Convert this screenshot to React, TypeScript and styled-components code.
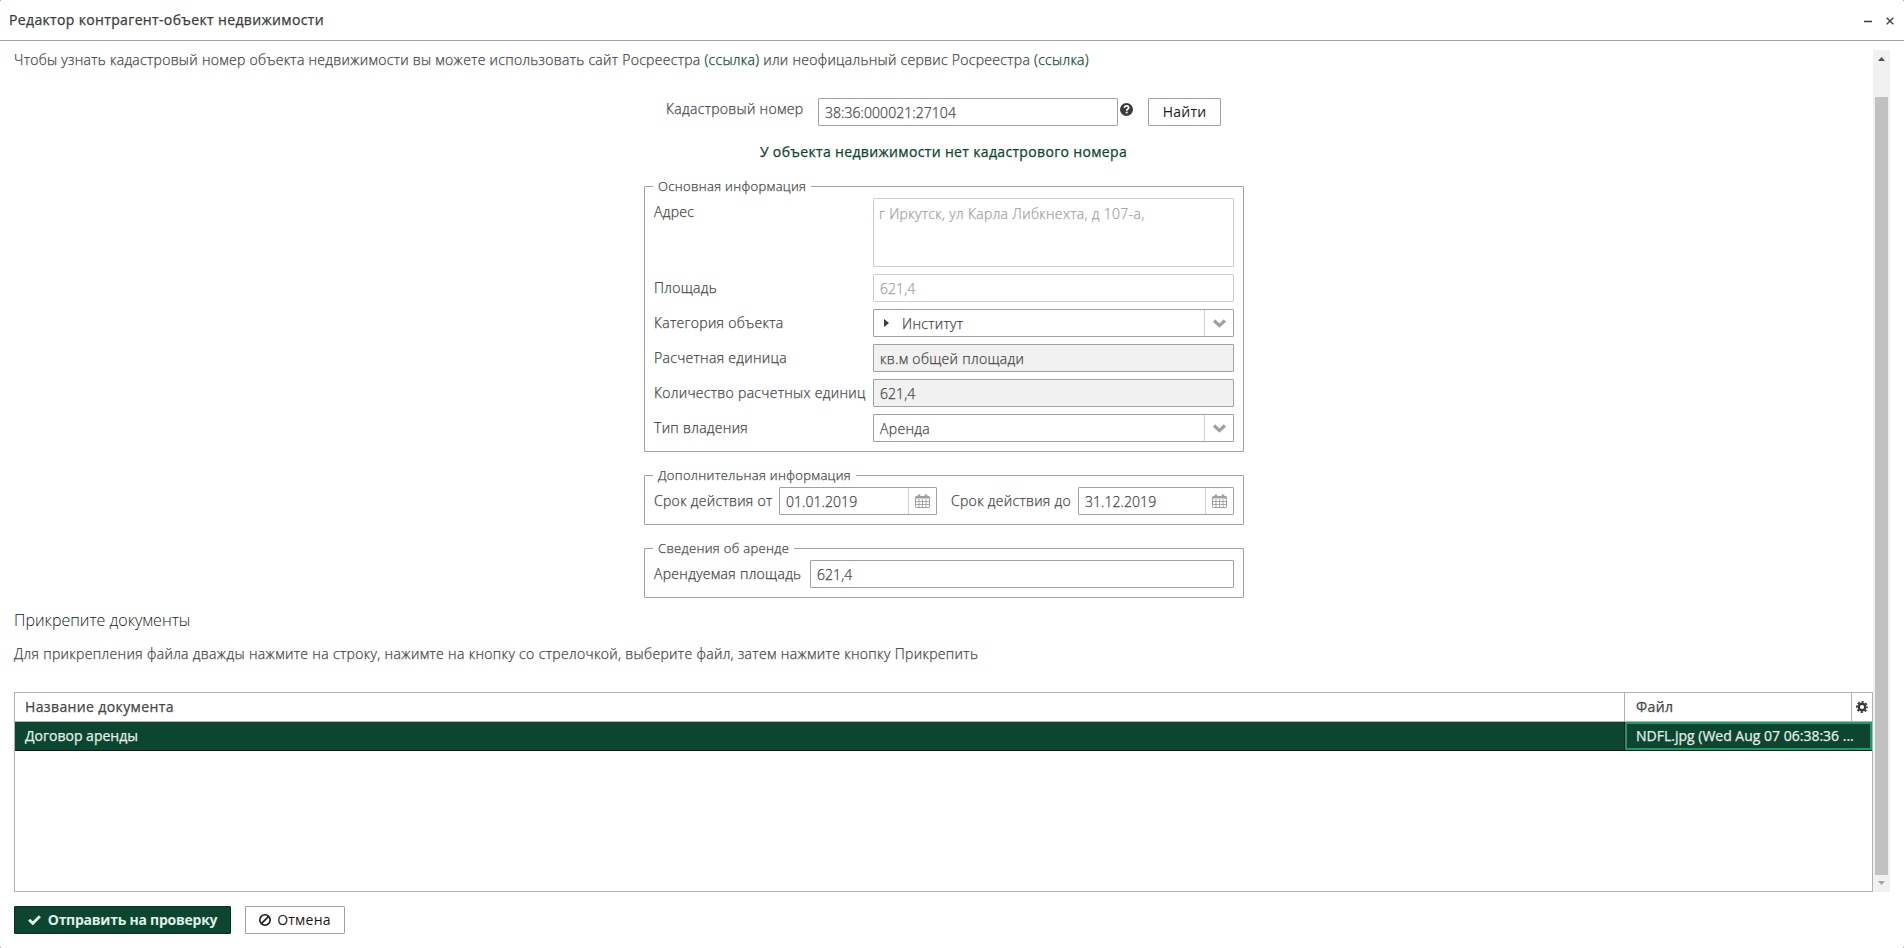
import React from 'react';
import styled, { createGlobalStyle, css } from 'styled-components';

const GlobalStyle = createGlobalStyle`
  *, *::before, *::after { box-sizing: border-box; }
  body { margin: 0; background: #8f8f8f; }
`;

const Window = styled.div`
  display: flex;
  flex-direction: column;
  width: 1904px;
  height: 948px;
  overflow: hidden;
  border-radius: 2px;
  background: #fff;
  font-family: 'Open Sans', sans-serif;
  font-size: 14px;
  font-weight: 300;
  letter-spacing: 0.3px;
  line-height: 20px;
  color: #474747;
  -webkit-text-stroke: 0.25px currentColor;
  svg { display: block; flex: none; }
`;

const Header = styled.header`
  display: flex;
  align-items: center;
  height: 41px;
  padding: 0 10px 0 9px;
  border-bottom: 1px solid #a0a0a0;
  font-weight: 400;
  letter-spacing: 0.35px;
  color: #3b3b3b;
`;

const Title = styled.div`
  flex: 1;
  white-space: nowrap;
`;

const WindowControls = styled.div`
  display: flex;
  gap: 14px;
  padding-top: 2px;
`;

const Body = styled.div`
  display: flex;
  height: 842px;
  margin: 9px 14px 0;
`;

const Content = styled.main`
  display: flex;
  flex-direction: column;
  width: 1859px;
`;

const Paragraph = styled.p<{ $top?: number; $spacing: number }>`
  margin: ${(p) => p.$top ?? 0}px 0 0;
  letter-spacing: ${(p) => p.$spacing}px;
  white-space: nowrap;
`;

const Link = styled.a`
  color: #0c4630;
`;

const SearchRow = styled.div`
  display: flex;
  justify-content: flex-end;
  width: 555px;
  height: 28px;
  margin: 28px 0 0 652px;
`;

const SearchLabel = styled.label`
  flex: 1;
  line-height: 21px;
  white-space: nowrap;
`;

const HelpIcon = styled.span`
  width: 30px;
  padding: 5px 0 0 2px;
`;

const LinkButton = styled.div`
  margin-top: 16px;
  text-align: center;
  font-weight: 400;
  letter-spacing: 0.34px;
  color: #0c4630;
`;

const Fieldset = styled.section<{ $top: number }>`
  position: relative;
  display: flex;
  flex-direction: column;
  gap: 7px;
  width: 600px;
  margin: ${(p) => p.$top}px 0 0 630px;
  padding: 11px 9px 9px;
  border: 1px solid #a0a0a0;
  border-radius: 1px;
`;

const Legend = styled.div`
  position: absolute;
  top: -11px;
  left: 8px;
  padding: 0 5px;
  background: #fff;
  font-size: 13px;
  letter-spacing: 0.33px;
  white-space: nowrap;
`;

const FormRow = styled.div<{ $tall?: boolean }>`
  display: flex;
  height: ${(p) => (p.$tall ? 69 : 28)}px;
`;

const Label = styled.label<{ $width: number; $drop?: number }>`
  width: ${(p) => p.$width}px;
  flex: none;
  padding-top: ${(p) => p.$drop ?? 4}px;
  white-space: nowrap;
`;

const Field = styled.div<{ $width?: number; $tone?: 'disabled' | 'readonly'; $area?: boolean; $numeric?: boolean }>`
  display: flex;
  ${(p) => (p.$width ? css`width: ${p.$width}px; flex: none;` : css`flex: 1;`)}
  border: 1px solid #a0a0a0;
  border-radius: 1px;
  padding-left: 6px;
  line-height: 28px;
  letter-spacing: ${(p) => (p.$numeric ? 0.06 : 0.32)}px;
  white-space: nowrap;
  ${(p) => p.$tone === 'disabled' && css`border-color: #cdcdcd; color: #a3a3a3;`}
  ${(p) => p.$tone === 'readonly' && css`background: #f1f1f1;`}
  ${(p) => p.$area && css`padding: 1px 0 0 5px;`}
`;

const Value = styled.span`
  display: flex;
  flex: 1;
`;

const TreeArrow = styled.span`
  width: 22px;
  padding: 9px 0 0 4px;
`;

const FieldButton = styled.span<{ $width: number }>`
  display: flex;
  align-items: center;
  justify-content: center;
  width: ${(p) => p.$width}px;
  border-left: 1px solid #d0d0d0;
  color: #a0a0a0;
`;

const Heading = styled.h3`
  margin: 11px 0 0;
  font-size: 16px;
  font-weight: 300;
  letter-spacing: 0;
  line-height: 22px;
  color: #191919;
  -webkit-text-stroke: 0;
`;

const Table = styled.div`
  height: 200px;
  margin-top: 28px;
  border: 1px solid #b1b1b1;
`;

const TableRow = styled.div<{ $header?: boolean }>`
  display: flex;
  height: 29px;
  font-weight: 400;
  letter-spacing: ${(p) => (p.$header ? 0.38 : 0)}px;
  line-height: 28px;
  color: ${(p) => (p.$header ? '#474747' : '#e3efe9')};
  background: ${(p) => (p.$header ? '#fff' : '#0c4630')};
  border-bottom: 1px solid ${(p) => (p.$header ? '#b1b1b1' : '#061d14')};
`;

const NameCell = styled.div<{ $edge: string }>`
  width: 1610px;
  padding-left: 10px;
  border-right: 1px solid ${(p) => p.$edge};
`;

const FileCell = styled.div<{ $focused?: boolean }>`
  flex: 1;
  padding-left: 11px;
  white-space: nowrap;
  ${(p) =>
    p.$focused &&
    css`
      height: 28px;
      padding-left: 9px;
      line-height: 24px;
      border: 2px solid #1a9c69;
    `}
`;

const ColumnMenu = styled.div`
  display: flex;
  align-items: center;
  justify-content: center;
  width: 21px;
  border-left: 1px solid #b1b1b1;
`;

const Scrollbar = styled.div`
  display: flex;
  flex-direction: column;
  align-items: center;
  justify-content: space-between;
  width: 17px;
  padding: 7px 0;
  background: #f1f1f1;
`;

const Thumb = styled.div`
  width: 13px;
  height: 778px;
  margin: 36px 0 6px;
  background: #c1c1c1;
`;

const Footer = styled.footer`
  display: flex;
  gap: 14px;
  margin: 14px 0 0 14px;
`;

const Button = styled.button<{ $width: number; $primary?: boolean }>`
  display: flex;
  align-items: center;
  justify-content: center;
  gap: ${(p) => (p.$primary ? 7 : 6)}px;
  width: ${(p) => p.$width}px;
  height: 28px;
  padding: 0;
  border: 1px solid ${(p) => (p.$primary ? '#08301f' : '#a0a0a0')};
  border-radius: 1px;
  background: ${(p) => (p.$primary ? '#0c4630' : '#fff')};
  color: ${(p) => (p.$primary ? '#dfeee7' : '#191919')};
  font: ${(p) => (p.$primary ? 700 : 400)} 14px/26px 'Open Sans', sans-serif;
  letter-spacing: ${(p) => (p.$primary ? -0.25 : 0.25)}px;
  white-space: nowrap;
  -webkit-text-stroke: 0;
`;

const Chevron = () => (
  <svg width="13" height="9" viewBox="0 0 13 9">
    <path d="M1.1 1.5 6.5 6.6 11.9 1.5" fill="none" stroke="currentColor" strokeWidth="3.2" />
  </svg>
);

const Calendar = () => (
  <svg width="15" height="14" viewBox="0 0 15 14" fill="none" stroke="currentColor">
    <rect x="0.5" y="2.5" width="14" height="11" rx="0.6" />
    <path d="M1 3.5H14" strokeWidth="2" />
    <path d="M4 0.4V3.5M11 0.4V3.5" strokeWidth="2.6" />
    <path d="M4 5V13M7.5 5V13M11 5V13M1 7.5H14M1 10.5H14" strokeWidth="0.9" />
  </svg>
);

const Help = () => (
  <svg width="13" height="13" viewBox="0 0 12 12">
    <circle cx="6" cy="6" r="6" fill="#3b3b3b" />
    <path d="M4 4.5C4.2 3.2 5 2.7 6.1 2.7 7.3 2.7 8 3.4 8 4.3 8 5.6 6.2 5.5 6.2 7.1" fill="none" stroke="#fff" strokeWidth="1.5" />
    <rect x="5.3" y="8" width="1.7" height="1.6" fill="#fff" />
  </svg>
);

const Check = () => (
  <svg width="13" height="10" viewBox="0 0 13 10">
    <path d="M1.1 4.8 4.8 8.4 11.9 1.3" fill="none" stroke="currentColor" strokeWidth="2.9" />
  </svg>
);

const Ban = () => (
  <svg width="12" height="12" viewBox="0 0 12 12" fill="none" stroke="currentColor" strokeWidth="1.6">
    <circle cx="6" cy="6" r="5.2" />
    <path d="M2.4 9.6 9.6 2.4" />
  </svg>
);

const Cog = () => (
  <svg width="12" height="12" viewBox="0 0 12 12" fill="none" stroke="#3b3b3b">
    <circle cx="6" cy="6" r="3.3" strokeWidth="2.4" />
    <circle cx="6" cy="6" r="5.1" strokeWidth="1.8" strokeDasharray="2.1 1.905" strokeDashoffset="1.05" />
  </svg>
);

const DateField = ({ width, value, button }: { width: number; value: string; button: number }) => (
  <Field $width={width} $numeric>
    <Value>{value}</Value>
    <FieldButton $width={button}><Calendar /></FieldButton>
  </Field>
);

export default function App() {
  return (
    <>
      <GlobalStyle />
      <Window>
        <Header>
          <Title>Редактор контрагент-объект недвижимости</Title>
          <WindowControls>
            <svg width="8" height="8" viewBox="0 0 8 8"><path d="M0 4.5H8" stroke="#3b3b3b" strokeWidth="1.3" /></svg>
            <svg width="8" height="8" viewBox="0 0 8 8"><path d="M0.7 0.7 7.3 7.3M7.3 0.7 0.7 7.3" stroke="#4b4b4b" strokeWidth="1.5" /></svg>
          </WindowControls>
        </Header>
        <Body>
          <Content>
            <Paragraph $spacing={0.29}>
              Чтобы узнать кадастровый номер объекта недвижимости вы можете использовать сайт Росреестра <Link>(ссылка)</Link> или неофицальный сервис Росреестра <Link>(ссылка)</Link>
            </Paragraph>
            <SearchRow>
              <SearchLabel>Кадастровый номер</SearchLabel>
              <Field $width={300} $numeric>38:36:000021:27104</Field>
              <HelpIcon><Help /></HelpIcon>
              <Button $width={73}>Найти</Button>
            </SearchRow>
            <LinkButton>У объекта недвижимости нет кадастрового номера</LinkButton>
            <Fieldset $top={24}>
              <Legend>Основная информация</Legend>
              <FormRow $tall>
                <Label $width={219}>Адрес</Label>
                <Field $tone="disabled" $area>г Иркутск, ул Карла Либкнехта, д 107-а,</Field>
              </FormRow>
              <FormRow>
                <Label $width={219}>Площадь</Label>
                <Field $tone="disabled" $numeric>621,4</Field>
              </FormRow>
              <FormRow>
                <Label $width={219}>Категория объекта</Label>
                <Field>
                  <Value>
                    <TreeArrow>
                      <svg width="5" height="8" viewBox="0 0 5 8"><path d="M0 0 5 4 0 8Z" fill="#3b3b3b" /></svg>
                    </TreeArrow>
                    Институт
                  </Value>
                  <FieldButton $width={29}><Chevron /></FieldButton>
                </Field>
              </FormRow>
              <FormRow>
                <Label $width={219}>Расчетная единица</Label>
                <Field $tone="readonly">кв.м общей площади</Field>
              </FormRow>
              <FormRow>
                <Label $width={219}>Количество расчетных единиц</Label>
                <Field $tone="readonly" $numeric>621,4</Field>
              </FormRow>
              <FormRow>
                <Label $width={219}>Тип владения</Label>
                <Field>
                  <Value>Аренда</Value>
                  <FieldButton $width={29}><Chevron /></FieldButton>
                </Field>
              </FormRow>
            </Fieldset>
            <Fieldset $top={23}>
              <Legend>Дополнительная информация</Legend>
              <FormRow>
                <Label $width={125}>Срок действия от</Label>
                <DateField width={158} value="01.01.2019" button={28} />
                <Label as="span" $width={14} />
                <Label $width={127}>Срок действия до</Label>
                <DateField width={156} value="31.12.2019" button={28} />
              </FormRow>
            </Fieldset>
            <Fieldset $top={23}>
              <Legend>Сведения об аренде</Legend>
              <FormRow>
                <Label $width={156}>Арендуемая площадь</Label>
                <Field $numeric>621,4</Field>
              </FormRow>
            </Fieldset>
            <Heading>Прикрепите документы</Heading>
            <Paragraph $top={13} $spacing={0.34}>
              Для прикрепления файла дважды нажмите на строку, нажимте на кнопку со стрелочкой, выберите файл, затем нажмите кнопку Прикрепить
            </Paragraph>
            <Table>
              <TableRow $header>
                <NameCell $edge="#b1b1b1">Название документа</NameCell>
                <FileCell>Файл</FileCell>
                <ColumnMenu><Cog /></ColumnMenu>
              </TableRow>
              <TableRow>
                <NameCell $edge="#061d14">Договор аренды</NameCell>
                <FileCell $focused>NDFL.jpg (Wed Aug 07 06:38:36 ...</FileCell>
              </TableRow>
            </Table>
          </Content>
          <Scrollbar>
            <svg width="7" height="4" viewBox="0 0 7 4"><path d="M0 4 3.5 0 7 4Z" fill="#505050" /></svg>
            <Thumb />
            <svg width="7" height="4" viewBox="0 0 7 4"><path d="M0 0H7L3.5 4Z" fill="#a3a3a3" /></svg>
          </Scrollbar>
        </Body>
        <Footer>
          <Button $width={217} $primary><Check />Отправить на проверку</Button>
          <Button $width={100}><Ban />Отмена</Button>
        </Footer>
      </Window>
    </>
  );
}
